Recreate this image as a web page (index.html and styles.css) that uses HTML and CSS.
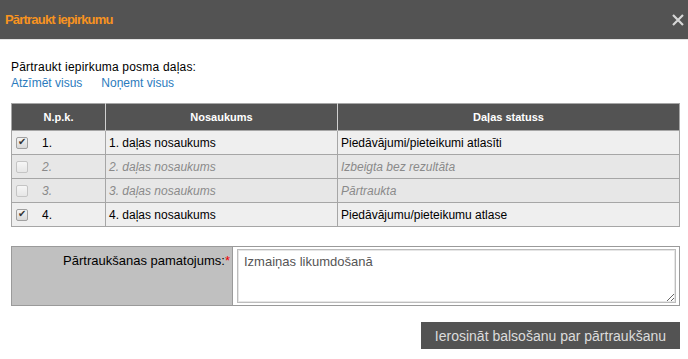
FILE: index.html
```html
<!DOCTYPE html>
<html lang="lv">
<head>
  <meta charset="UTF-8" />
  <title>Pārtraukt iepirkumu</title>
  <link rel="stylesheet" href="styles.css">
</head>
<body>

  <header class="dlg-head">
    <h1>Pārtraukt iepirkumu</h1>
    <span class="close" title="Aizvērt">
      <svg width="12" height="12" viewBox="0 0 12 12">
        <path d="M1 1 L11 11 M11 1 L1 11" stroke="#d6d6d6" stroke-width="2.2" fill="none"/>
      </svg>
    </span>
  </header>

  <main class="dlg-body">
    <p class="intro">Pārtraukt iepirkuma posma daļas:</p>
    <p class="links">
      <a href="#">Atzīmēt visus</a>
      <a href="#">Noņemt visus</a>
    </p>

    <table class="parts">
      <thead>
        <tr>
          <th class="c-num">N.p.k.</th>
          <th class="c-name">Nosaukums</th>
          <th>Daļas statuss</th>
        </tr>
      </thead>
      <tbody>
        <tr>
          <td class="c-num"><span class="chk on"></span>1.</td>
          <td>1. daļas nosaukums</td>
          <td>Piedāvājumi/pieteikumi atlasīti</td>
        </tr>
        <tr class="off">
          <td class="c-num"><span class="chk"></span>2.</td>
          <td>2. daļas nosaukums</td>
          <td>Izbeigta bez rezultāta</td>
        </tr>
        <tr class="off">
          <td class="c-num"><span class="chk"></span>3.</td>
          <td>3. daļas nosaukums</td>
          <td>Pārtraukta</td>
        </tr>
        <tr>
          <td class="c-num"><span class="chk on"></span>4.</td>
          <td>4. daļas nosaukums</td>
          <td>Piedāvājumu/pieteikumu atlase</td>
        </tr>
      </tbody>
    </table>

    <div class="reason">
      <label for="reason">Pārtraukšanas pamatojums:<span class="req">*</span></label>
      <div class="field">
        <textarea id="reason">Izmaiņas likumdošanā</textarea>
      </div>
    </div>

    <div class="actions">
      <button type="button">Ierosināt balsošanu par pārtraukšanu</button>
    </div>
  </main>

</body>
</html>
```

FILE: styles.css
```css
:root {
  --slate: #535353;
  --orange: #f8931f;
  --line: #a6a6a6;
  --link: #2b7bbd;
}

body {
  margin: 0;
  font-family: "Liberation Sans", Arial, sans-serif;
  font-size: 12px;
  color: #000;
  background: #fff;
}

.dlg-head {
  height: 40px;
  background: var(--slate);
  border-bottom: 1px solid #e4e4e4;
  box-sizing: border-box;
  display: flex;
  align-items: center;
  justify-content: space-between;
  padding: 0 4px 0 5px;
}

.dlg-head h1 {
  margin: 0;
  color: var(--orange);
  font-family: "Liberation Sans", Arial, sans-serif;
  font-size: 13px;
  letter-spacing: -0.8px;
  font-weight: bold;
}

.close {
  display: flex;
  width: 12px;
  height: 12px;
}

.dlg-body {
  padding: 20px 8px 0 11px;
}

.intro {
  margin: 0;
  line-height: 15px;
  letter-spacing: 0.2px;
}

.links {
  margin: 1px 0 0;
  line-height: 15px;
  display: flex;
  gap: 19px;
}

.links a {
  color: var(--link);
  text-decoration: none;
}

.parts {
  margin-top: 12px;
  width: 100%;
  border-collapse: collapse;
  border: 1px solid var(--line);
}

.parts th {
  background: var(--slate);
  color: #fff;
  font-size: 11px;
  font-weight: bold;
  height: 26px;
  padding: 0;
  border-left: 1px solid #d0d0d0;
}

.parts th:first-child {
  border-left: none;
}

.parts td {
  background: #efefef;
  height: 23px;
  padding: 0 3px;
  border: 1px solid var(--line);
}

.parts .c-num {
  width: 86px;
}

.parts .c-name {
  width: 231px;
}

.parts td.c-num {
  padding-left: 4px;
}

.parts tr.off td {
  background: #e7e7e7;
  color: #8a8a8a;
  font-style: italic;
}

.chk {
  display: inline-block;
  vertical-align: -2px;
  width: 10px;
  height: 10px;
  margin-right: 14px;
  border: 1px solid #a0a0a0;
  border-radius: 2px;
  background: linear-gradient(#f4f4f4, #d8d8d8);
  position: relative;
}

.off .chk {
  border-color: #c4c4c4;
  background: linear-gradient(#f6f6f6, #e6e6e6);
}

.chk.on::after {
  content: "✔";
  position: absolute;
  left: 1px;
  top: -2px;
  font-size: 10px;
  font-style: normal;
  color: #333;
}

.reason {
  margin-top: 19px;
  display: grid;
  grid-template-columns: 221px 1fr;
  border: 1px solid #9a9a9a;
  height: 60px;
  box-sizing: border-box;
}

.reason label {
  background: #c0c0c0;
  border-right: 1px solid #9a9a9a;
  text-align: right;
  font-size: 13px;
  padding: 6px 2px 0 0;
}

.req {
  color: #e00;
}

.field {
  padding: 2px 3px 2px 4px;
  background: #fff;
  display: flex;
}

.field textarea {
  flex: 1;
  box-sizing: border-box;
  border: 1px solid #bdbdbd;
  box-shadow: inset 0 0 0 1px #e6e6e6;
  padding: 4px 6px;
  font-family: "Liberation Sans", Arial, sans-serif;
  font-size: 13px;
  color: #555;
  resize: vertical;
  outline: none;
}

.actions {
  margin-top: 16px;
  display: flex;
  justify-content: flex-end;
}

.actions button {
  background: var(--slate);
  color: #dcdcdc;
  border: none;
  height: 27px;
  padding: 0 14px;
  font-family: "Liberation Sans", Arial, sans-serif;
  font-size: 14px;
  cursor: pointer;
}
```
